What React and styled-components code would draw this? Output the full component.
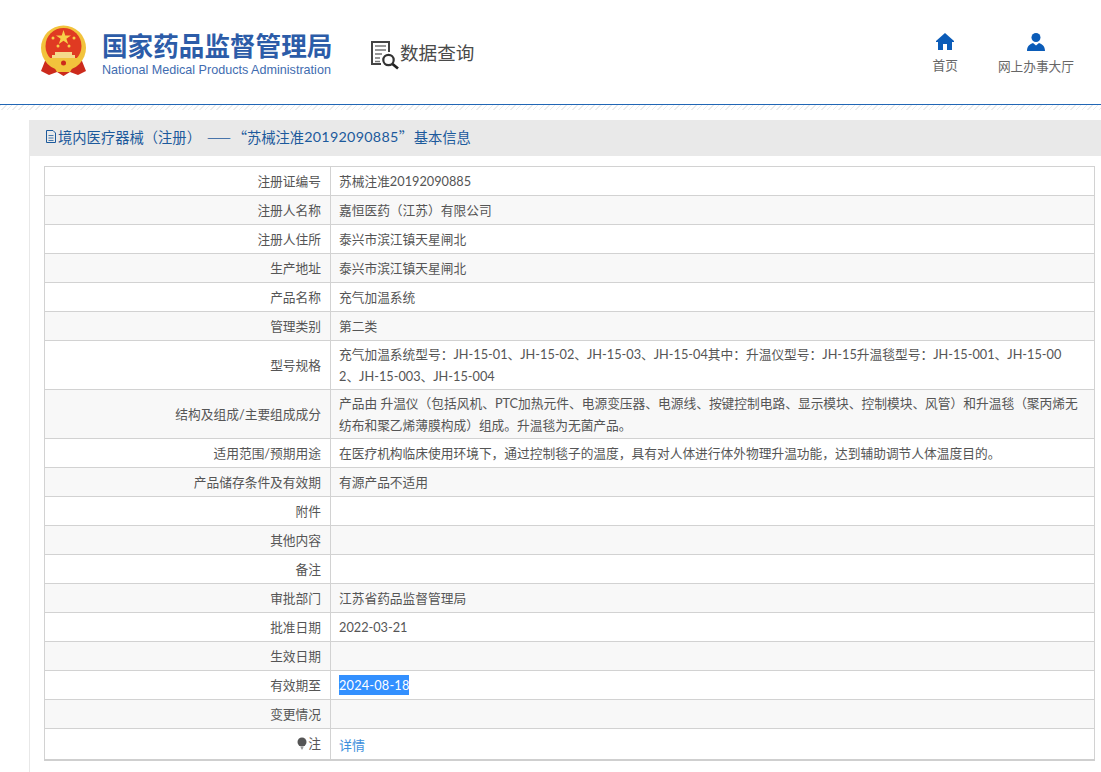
import React from 'react';
import styled, { createGlobalStyle } from 'styled-components';

const GlobalStyle = createGlobalStyle`
  html, body {
    margin: 0;
    padding: 0;
    background: #fff;
    font-family: Lato, "Noto Sans CJK SC", sans-serif;
    font-size: 12.72px;
    color: #555;
  }
`;

const Page = styled.div`
  width: 1101px;
  height: 772px;
  overflow: hidden;
`;

const Header = styled.header`
  height: 105px;
  box-sizing: border-box;
  display: flex;
  align-items: flex-start;
  padding: 25px 0 0 40px;
  border-bottom: 1px solid #2166b5;
`;

const Brand = styled.div`
  display: flex;
  margin-right: 38px;
`;

const BrandText = styled.div`
  width: 230px;
  margin-left: 15px;
  padding-top: 5px;
`;

const BrandName = styled.div`
  font-family: "Noto Sans CJK SC", sans-serif;
  font-size: 25.6px;
  line-height: 29px;
  font-weight: 700;
  color: #2c5ca8;
  white-space: nowrap;
`;

const BrandEnglish = styled.div`
  font-family: "Liberation Sans", sans-serif;
  font-size: 12.6px;
  line-height: 15px;
  margin-top: 4px;
  color: #3f6cb0;
  white-space: nowrap;
`;

const QueryTitle = styled.div`
  display: flex;
  align-items: center;
  margin-top: 8px;
  font-family: "Noto Sans CJK SC", sans-serif;
  font-size: 18.6px;
  line-height: 28px;
  color: #4a4a4a;
`;

const QuerySvg = styled.svg`
  flex-shrink: 0;
  margin-top: 7px;
`;

const Nav = styled.nav`
  margin-left: auto;
  display: flex;
  gap: 40px;
  padding: 8px 27px 0 0;
`;

const NavItem = styled.a`
  display: flex;
  flex-direction: column;
  align-items: center;
  color: #666;
  font-size: 12.7px;
  line-height: 18px;
  gap: 6px;
`;

const Hatch = styled.div`
  height: 5px;
  background: repeating-linear-gradient(135deg, #ececec 0 1px, #fff 1px 4px);
`;

const Panel = styled.section`
  margin: 10px 0 0 29px;
  border-left: 1px solid #e8e8e8;
  padding-bottom: 40px;
`;

const PanelTitle = styled.h2`
  margin: 0;
  height: 36px;
  box-sizing: border-box;
  display: flex;
  align-items: center;
  padding: 0 0 3px 15px;
  background: #e9e9e9;
  color: #1c5a9c;
  font-size: 14.3px;
  font-weight: 400;
  white-space: pre;
`;

const Dash = styled.span`
  font-family: "Noto Sans CJK SC", sans-serif;
  letter-spacing: 1px;
  margin-left: 6px;
`;

const Quote = styled.span`
  width: 15px;
  font-family: "Noto Sans CJK SC", sans-serif;
  text-align: ${(p) => (p.$open ? 'right' : 'left')};
`;

const CertNo = styled.span`
  letter-spacing: 0.3px;
`;

const DocSvg = styled.svg`
  flex-shrink: 0;
  margin-right: 1px;
`;

const InfoTable = styled.table`
  width: 1051px;
  margin: 10px 0 0 14px;
  border-collapse: collapse;
  table-layout: fixed;
  border-bottom: 2px solid #cfcfcf;
`;

const Row = styled.tr`
  background: ${(p) => (p.$odd ? '#f8f8f8' : '#fff')};

  &:last-child th {
    height: 31px;
  }

  &:last-child td {
    padding-top: 3px;
    padding-bottom: 1px;
  }
`;

const Label = styled.th`
  width: 286px;
  box-sizing: border-box;
  padding: 0 9px 0 0;
  height: 29px;
  border: 1px solid #d2d2d2;
  text-align: right;
  font-weight: 400;
  color: #555;
  line-height: 22px;
`;

const Value = styled.td`
  padding: 2px 15px 2px 8px;
  border: 1px solid #d2d2d2;
  color: #555;
  line-height: 22px;
  word-break: break-all;
`;

const Selected = styled.span`
  display: inline-block;
  line-height: 20px;
  letter-spacing: 0.2px;
  background: #3390ff;
  color: #fff;
`;

const DetailLink = styled.a`
  color: #3d8fdc;
  font-size: 13px;
`;

const NoteLabel = styled.span`
  display: inline-flex;
  align-items: center;
  gap: 1px;
`;

const rows = [
  ['注册证编号', '苏械注准20192090885'],
  ['注册人名称', '嘉恒医药（江苏）有限公司'],
  ['注册人住所', '泰兴市滨江镇天星闸北'],
  ['生产地址', '泰兴市滨江镇天星闸北'],
  ['产品名称', '充气加温系统'],
  ['管理类别', '第二类'],
  [
    '型号规格',
    <>
      充气加温系统型号：JH-15-01、JH-15-02、JH-15-03、JH-15-04其中：升温仪型号：JH-15升温毯型号：JH-15-001、JH-15-00
      <br />
      2、JH-15-003、JH-15-004
    </>,
  ],
  ['结构及组成/主要组成成分', '产品由 升温仪（包括风机、PTC加热元件、电源变压器、电源线、按键控制电路、显示模块、控制模块、风管）和升温毯（聚丙烯无纺布和聚乙烯薄膜构成）组成。升温毯为无菌产品。'],
  ['适用范围/预期用途', '在医疗机构临床使用环境下，通过控制毯子的温度，具有对人体进行体外物理升温功能，达到辅助调节人体温度目的。'],
  ['产品储存条件及有效期', '有源产品不适用'],
  ['附件', ''],
  ['其他内容', ''],
  ['备注', ''],
  ['审批部门', '江苏省药品监督管理局'],
  ['批准日期', '2022-03-21'],
  ['生效日期', ''],
  ['有效期至', <Selected>2024-08-18</Selected>],
  ['变更情况', ''],
  [
    <NoteLabel>
      <BulbIcon />注
    </NoteLabel>,
    <DetailLink>详情</DetailLink>,
  ],
];

function Emblem() {
  return (
    <svg width="47" height="52" viewBox="0 0 47 52">
      <path d="M5 36 L1 46 L9 50 L17 47 L23.5 51 L30 47 L38 50 L46 46 L42 36 Z" fill="#cc2a1c" />
      <circle cx="23.5" cy="23" r="22.5" fill="#f2c33c" />
      <circle cx="23.5" cy="21" r="18" fill="#e03a22" />
      <polygon points="23.5,5 25.3,10.5 31,10.5 26.4,13.8 28.2,19 23.5,15.8 18.8,19 20.6,13.8 16,10.5 21.7,10.5" fill="#f7d048" />
      <circle cx="13" cy="13" r="1.5" fill="#f7d048" />
      <circle cx="34" cy="13" r="1.5" fill="#f7d048" />
      <circle cx="18" cy="21" r="1.5" fill="#f7d048" />
      <circle cx="29" cy="21" r="1.5" fill="#f7d048" />
      <path d="M15 27 h17 v3 h3 v3 h-23 v-3 h3 Z" fill="#f5d98a" />
      <path d="M6 33 h35 v3 q-8 7 -17.500 7 q-9.500 0 -17.500 -7 Z" fill="#f2c33c" />
      <path d="M14 42 h19 l-3 5 h-13 Z" fill="#f2c33c" />
      <circle cx="23.5" cy="38" r="2.500" fill="#cc2a1c" />
    </svg>
  );
}

function QueryIcon() {
  return (
    <QuerySvg width="30" height="30" viewBox="0 0 30 30">
      <path d="M11 24 H2 V2 H19 V12" fill="none" stroke="#444" strokeWidth="2" />
      <path d="M5 6 H16 M5 10 H16 M5 14 H12 M5 18 H10 M5 21.500 H10" stroke="#777" strokeWidth="1.300" />
      <circle cx="18.500" cy="20" r="5.200" fill="none" stroke="#333" strokeWidth="2.200" />
      <path d="M22.500 24 L28 28.500" stroke="#222" strokeWidth="2.800" />
    </QuerySvg>
  );
}

function HomeIcon() {
  return (
    <svg width="18" height="17" viewBox="0 0 18 17">
      <path d="M9 0 L18 8 V9 H16 V17 H11 V11 H7 V17 H2 V9 H0 V8 Z" fill="#0b5cb8" />
    </svg>
  );
}

function UserIcon() {
  return (
    <svg width="18" height="18" viewBox="0 0 18 18">
      <circle cx="9" cy="4.500" r="4.500" fill="#0b5cb8" />
      <path d="M0 18 C0 13 3 11 6 10 L9 12.500 L12 10 C15 11 18 13 18 18 Z" fill="#0b5cb8" />
    </svg>
  );
}

function DocIcon() {
  return (
    <DocSvg width="12" height="13" viewBox="0 0 12 13">
      <path d="M1.500 0.500 H8 L10.500 3 V12.500 H1.500 Z" fill="none" stroke="#1c5a9c" />
      <path d="M3.500 5.500 H8.500 M3.500 8 H8.500 M3.500 10.500 H8.500" stroke="#1c5a9c" strokeWidth="0.800" />
    </DocSvg>
  );
}

function BulbIcon() {
  return (
    <svg width="10" height="13" viewBox="0 0 10 13">
      <circle cx="5" cy="5" r="4.500" fill="#555" />
      <path d="M3.500 10 H6.500 L5.500 12.500 H4.500 Z" fill="#999" />
    </svg>
  );
}

export default function App() {
  return (
    <Page>
      <GlobalStyle />
      <Header>
        <Brand>
          <Emblem />
          <BrandText>
            <BrandName>国家药品监督管理局</BrandName>
            <BrandEnglish>National Medical Products Administration</BrandEnglish>
          </BrandText>
        </Brand>
        <QueryTitle>
          <QueryIcon />
          数据查询
        </QueryTitle>
        <Nav>
          <NavItem>
            <HomeIcon />
            首页
          </NavItem>
          <NavItem>
            <UserIcon />
            网上办事大厅
          </NavItem>
        </Nav>
      </Header>
      <Hatch />
      <Panel>
        <PanelTitle>
          <DocIcon />
          境内医疗器械（注册）
          <Dash>——</Dash>
          <Quote $open>“</Quote>
          苏械注准
          <CertNo>20192090885</CertNo>
          <Quote>”</Quote>
          基本信息
        </PanelTitle>
        <InfoTable>
          <tbody>
            {rows.map(([label, value], i) => (
              <Row key={i} $odd={i % 2 === 1}>
                <Label>{label}</Label>
                <Value>{value}</Value>
              </Row>
            ))}
          </tbody>
        </InfoTable>
      </Panel>
    </Page>
  );
}
